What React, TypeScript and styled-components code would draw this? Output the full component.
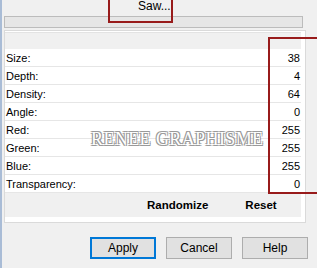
import React from 'react'
import styled, { createGlobalStyle } from 'styled-components'

const GlobalStyle = createGlobalStyle`
  html, body {
    margin: 0;
    padding: 0;
    background: #f0f0f0;
    overflow: hidden;
  }
`

const Window = styled.div`
  position: relative;
  width: 317px;
  height: 268px;
  background: #f0f0f0;
  border-left: 2px solid #a9bcd6;
  box-sizing: border-box;
  padding: 0 0 0 2px;
  font-family: 'Liberation Sans', Arial, sans-serif;
  color: #000;
  overflow: hidden;
`

const PresetRow = styled.div`
  height: 14px;
  display: flex;
  padding-left: 134px;
`

const PresetLabel = styled.span`
  font-size: 12px;
  line-height: 13px;
  margin-top: 0;
`

const Track = styled.div`
  margin-top: 2px;
  width: 297px;
  height: 10px;
  background: #e6e6e6;
  border: 1px solid #bcbcbc;
`

const Panel = styled.div`
  margin-top: 2px;
  width: 302px;
  height: 193px;
  background: #fff;
  border: 1px solid #dadada;
  box-sizing: border-box;
  padding: 1px 4px 5px 0;
  display: flex;
  flex-direction: column;
`

const Header = styled.div`
  height: 16px;
  background: #f0f0f0;
  border-top: 1px solid #e3e3e3;
`

const List = styled.div`
  display: flex;
  flex-direction: column;
`

const Row = styled.div`
  height: 18px;
  box-sizing: border-box;
  border-bottom: 1px solid #e6e6e6;
  display: flex;
  align-items: center;
  justify-content: space-between;
  padding: 0 1px 0 1px;
  font-size: 11px;
`

const Value = styled.span`
  text-align: right;
`

const ActionRow = styled.div`
  flex: 1;
  background: #f0f0f0;
  display: flex;
  align-items: center;
  font-size: 11.5px;
  font-weight: bold;
`

const Action = styled.span<{ left: number }>`
  margin-left: ${({ left }) => left}px;
`

const Footer = styled.div`
  display: flex;
  gap: 10px;
  justify-content: flex-end;
  padding: 14px 9px 0 0;
`

const Button = styled.button<{ primary?: boolean }>`
  width: 66px;
  height: 22px;
  box-sizing: border-box;
  background: #e1e1e1;
  border: ${({ primary }) => (primary ? '2px solid #0078d7' : '1px solid #adadad')};
  font-family: 'Liberation Sans', Arial, sans-serif;
  font-size: 12px;
  color: #000;
  padding: 0;
`

const Mark = styled.div<{ x: number; y: number; w: number; h: number }>`
  position: absolute;
  left: ${({ x }) => x}px;
  top: ${({ y }) => y}px;
  width: ${({ w }) => w}px;
  height: ${({ h }) => h}px;
  border: 2px solid #981b1b;
  box-sizing: border-box;
  pointer-events: none;
`

const Watermark = styled.div`
  position: absolute;
  left: 89px;
  top: 129px;
  font-family: 'Liberation Serif', 'Times New Roman', serif;
  font-size: 18px;
  letter-spacing: 0.4px;
  color: #fff;
  text-shadow: -1px -1px 0 #9a9a9a, 1px -1px 0 #9a9a9a, -1px 1px 0 #9a9a9a, 1px 1px 0 #9a9a9a;
  pointer-events: none;
`

const params = [
  ['Size:', 38],
  ['Depth:', 4],
  ['Density:', 64],
  ['Angle:', 0],
  ['Red:', 255],
  ['Green:', 255],
  ['Blue:', 255],
  ['Transparency:', 0],
]

export default function App() {
  return (
    <>
      <GlobalStyle />
      <Window>
        <PresetRow>
          <PresetLabel>Saw...</PresetLabel>
        </PresetRow>
        <Track />
        <Panel>
          <Header />
          <List>
            {params.map(([label, value]) => (
              <Row key={label}>
                <span>{label}</span>
                <Value>{value}</Value>
              </Row>
            ))}
          </List>
          <ActionRow>
            <Action left={142}>Randomize</Action>
            <Action left={37}>Reset</Action>
          </ActionRow>
        </Panel>
        <Footer>
          <Button primary>Apply</Button>
          <Button>Cancel</Button>
          <Button>Help</Button>
        </Footer>
        <Mark x={106} y={-4} w={65} h={27} />
        <Mark x={266} y={37} w={60} h={157} />
        <Watermark>RENEE GRAPHISME</Watermark>
      </Window>
    </>
  )
}
